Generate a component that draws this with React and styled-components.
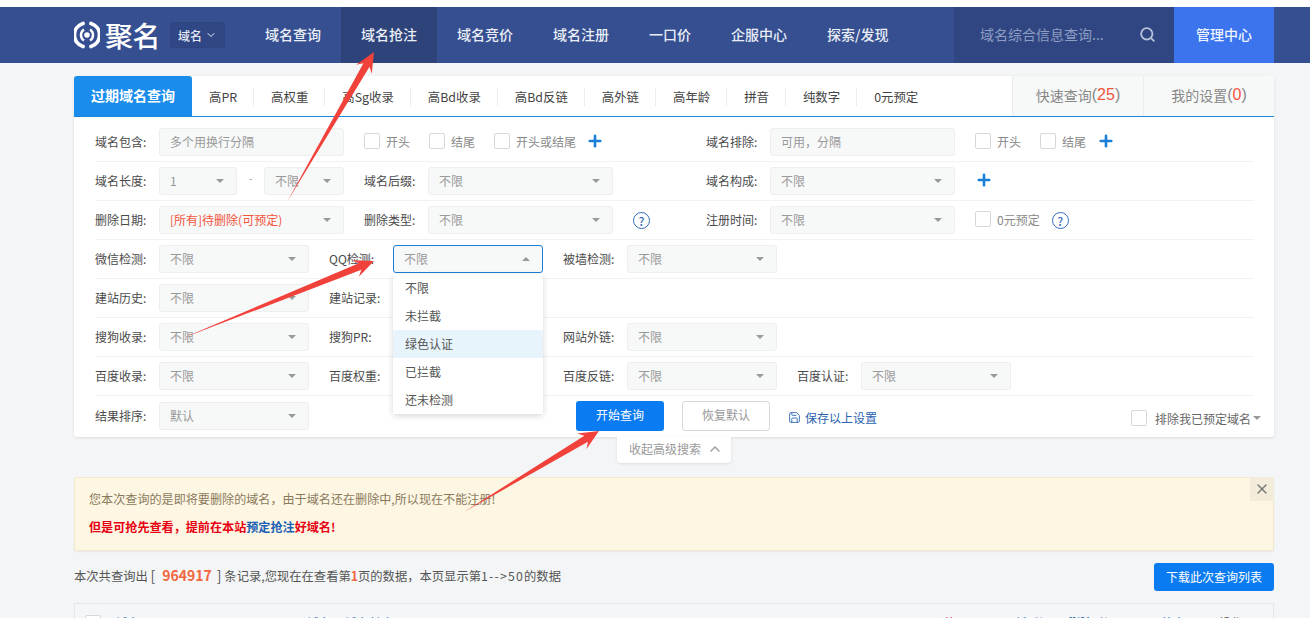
import React from 'react'
import styled, { createGlobalStyle } from 'styled-components'
import { ChevronDown, ChevronUp, Plus, Save, Search, X } from 'lucide-react'

const GlobalStyle = createGlobalStyle`
  html, body {
    margin: 0;
    height: 618px;
    overflow: hidden;
    background: #f4f5f6;
    font-family: "Noto Sans CJK SC", "Liberation Sans", sans-serif;
    font-size: 12px;
    color: #555;
  }
  * { box-sizing: border-box; }
`

const Page = styled.div`
  position: relative;
  width: 1310px;
  height: 618px;
  overflow: hidden;
  padding-top: 7px;
  background: linear-gradient(#fff 7px, #f4f5f6 7px);
`

const Header = styled.header`
  display: flex;
  align-items: stretch;
  height: 56px;
  padding-left: 74px;
  background: #354f90;
`

const Logo = styled.div`
  display: flex;
  align-items: center;
  gap: 5px;
  width: 96px;
  color: #fff;
  font-size: 28px;
  font-weight: 500;
  letter-spacing: -0.5px;
  line-height: 1;
  white-space: nowrap;
`

const TypeSwitch = styled.div`
  display: flex;
  align-items: center;
  justify-content: center;
  gap: 3px;
  align-self: center;
  width: 55px;
  height: 26px;
  margin-right: 20px;
  border: 1px solid #2e4580;
  border-radius: 3px;
  background: #2f4784;
  color: #e6ebf5;
  font-size: 12px;
  font-weight: 500;
`

const NavItem = styled.a`
  display: flex;
  align-items: center;
  padding: 0 20px 2px;
  background: ${(p) => (p.$active ? '#2d4379' : 'transparent')};
  color: #e9edf6;
  font-size: 14px;
  font-weight: 500;
  white-space: nowrap;
`

const SearchBox = styled.div`
  display: flex;
  align-items: center;
  justify-content: space-between;
  width: 220px;
  margin-left: auto;
  padding: 0 18px 2px 26px;
  background: #2f4682;
  color: #8e9dc2;
  font-size: 14px;
  white-space: nowrap;
`

const ManageButton = styled.a`
  display: flex;
  align-items: center;
  justify-content: center;
  width: 100px;
  margin-right: 36px;
  padding-bottom: 2px;
  background: #3c74ee;
  color: #eef3fe;
  font-size: 14px;
  font-weight: 500;
`

const Content = styled.main`
  width: 1200px;
  margin-left: 74px;
  padding-top: 13px;
`

const Panel = styled.section`
  height: 361px;
  background: #fff;
  border-radius: 3px;
  box-shadow: 0 1px 3px rgba(0, 0, 0, 0.1);
`

const TabBar = styled.div`
  display: flex;
  align-items: stretch;
  height: 41px;
  border-bottom: 1px solid #1a86e0;
`

const ActiveTab = styled.div`
  display: flex;
  align-items: center;
  justify-content: center;
  width: 118px;
  padding-bottom: 2px;
  background: #1a8cec;
  border-radius: 3px 3px 0 0;
  color: #fff;
  font-size: 14px;
  font-weight: 700;
`

const Tab = styled.a`
  position: relative;
  display: flex;
  align-items: center;
  padding: 1px 17px 0;
  color: #444;
  font-size: 12.4px;
  white-space: nowrap;
  &:not(:last-of-type)::after {
    content: '';
    position: absolute;
    right: 0;
    top: 12px;
    height: 18px;
    width: 1px;
    background: #eee;
  }
`

const SideTab = styled.div`
  display: flex;
  align-items: center;
  justify-content: center;
  width: 131px;
  padding-bottom: 2px;
  background: #f7f8f8;
  border-left: 1px solid #ececec;
  color: #888;
  font-size: 14px;
  ${(p) => p.$first && 'margin-left: auto;'}
`

const Count = styled.span`
  font-family: "Liberation Sans", sans-serif;
  font-size: 16px;
  em { font-style: normal; color: #f2553c; }
`

const Rows = styled.div`
  padding: 6px 20px 0 21px;
`

const WideRow = styled.div`
  display: grid;
  grid-template-columns: 269px 342px 1fr;
  align-items: center;
  height: 39px;
  border-bottom: 1px solid #f2f2f2;
`

const NarrowRow = styled.div`
  display: grid;
  grid-template-columns: 234px 234px 234px 1fr;
  align-items: center;
  height: 39px;
  border-bottom: 1px solid #f2f2f2;
`

const ActionRow = styled.div`
  display: flex;
  align-items: center;
  height: 40px;
  margin-right: -7px;
`

const Field = styled.div`
  display: flex;
  align-items: center;
`

const Label = styled.label`
  flex: none;
  width: 64px;
  padding-bottom: 2px;
  color: #4a4a4a;
  font-size: 12px;
  white-space: nowrap;
`

const SelectBox = styled.div`
  position: relative;
  flex: none;
  display: flex;
  align-items: center;
  width: ${(p) => p.$w || 150}px;
  height: 28px;
  padding: 0 0 2px 10px;
  background: #f7f8f8;
  border: 1px solid ${(p) => (p.$open ? '#1a7fd6' : '#eeeeee')};
  border-radius: 3px;
  color: ${(p) => (p.$alert ? '#f2553c' : '#999')};
  font-size: 12px;
  white-space: nowrap;
  &::after {
    content: '';
    position: absolute;
    right: 12px;
    top: 50%;
    margin-top: -2px;
    border: 4px solid transparent;
    border-top: ${(p) => (p.$open ? 0 : '4px solid #999')};
    border-bottom: ${(p) => (p.$open ? '4px solid #999' : 0)};
  }
`

const TextInput = styled(SelectBox)`
  &::after { display: none; }
`

const Dash = styled.span`
  flex: none;
  width: 27px;
  text-align: center;
  color: #aaa;
  transform: translateY(-4px);
`

const CheckItem = styled.span`
  display: inline-flex;
  align-items: center;
  gap: 6px;
  margin-left: ${(p) => p.$ml || 0}px;
  margin-right: ${(p) => (p.$end ? 0 : 19)}px;
  padding-bottom: 2px;
  color: #888;
  font-size: 12px;
  white-space: nowrap;
`

const Box = styled.i`
  flex: none;
  width: 16px;
  height: 16px;
  background: #fff;
  border: 1px solid #d8d8d8;
  border-radius: 2px;
`

const AddIcon = styled(Plus)`
  flex: none;
  color: #1a7fd6;
  margin-left: ${(p) => p.$ml || 0}px;
  transform: translateY(-1px);
`

const Help = styled.span`
  display: inline-flex;
  align-items: center;
  justify-content: center;
  flex: none;
  width: 17px;
  height: 17px;
  margin-left: ${(p) => p.$ml || 0}px;
  border: 1.5px solid #2f6cb8;
  border-radius: 50%;
  color: #2f6cb8;
  font-size: 12px;
  font-weight: 500;
`

const Dropdown = styled.ul`
  position: absolute;
  left: -1px;
  top: 28px;
  z-index: 5;
  width: 150px;
  margin: 0;
  padding: 0;
  list-style: none;
  background: #fff;
  border-radius: 0 0 3px 3px;
  box-shadow: 0 2px 6px rgba(0, 0, 0, 0.16);
`

const Option = styled.li`
  display: flex;
  align-items: center;
  height: 28px;
  padding: 0 0 1px 12px;
  background: ${(p) => (p.$hover ? '#e8f4fc' : '#fff')};
  color: #555;
  font-size: 12px;
`

const SubmitButton = styled.button`
  width: 88px;
  height: 30px;
  margin-left: 267px;
  padding: 0 0 3px;
  background: #0a7bf0;
  border: 0;
  border-radius: 3px;
  color: #fff;
  font: inherit;
`

const ResetButton = styled.button`
  width: 88px;
  height: 30px;
  margin-left: 18px;
  padding: 0 0 3px;
  background: #fff;
  border: 1px solid #d9d9d9;
  border-radius: 3px;
  color: #999;
  font: inherit;
`

const SaveLink = styled.a`
  display: inline-flex;
  align-items: center;
  gap: 4px;
  margin-left: 18px;
  color: #2a62b0;
  font-size: 12px;
  transform: translateY(1px);
`

const ExcludeCheck = styled.span`
  display: inline-flex;
  align-items: center;
  gap: 8px;
  margin-left: auto;
  color: #666;
  font-size: 12px;
  transform: translateY(2px);
  &::after {
    content: '';
    margin-left: -6px;
    border: 4px solid transparent;
    border-top: 4px solid #999;
    border-bottom: 0;
  }
`

const CollapseTab = styled.div`
  display: flex;
  align-items: center;
  justify-content: center;
  gap: 6px;
  width: 114px;
  height: 26px;
  margin-left: 543px;
  padding: 0 0 3px 4px;
  background: #fff;
  border-radius: 0 0 4px 4px;
  box-shadow: 0 1px 3px rgba(0, 0, 0, 0.1);
  color: #999;
  font-size: 12px;
`

const Notice = styled.div`
  position: relative;
  height: 74px;
  margin-top: 14px;
  padding: 12px 14px 0 14px;
  background: #fdf6e3;
  border: 1px solid #f3e8cb;
  border-radius: 2px;
  box-shadow: 0 1px 2px rgba(0, 0, 0, 0.06);
`

const NoticeLine = styled.p`
  margin: 0 0 10px;
  height: 18px;
  line-height: 18px;
  color: #8a7a5c;
  font-size: 12.1px;
`

const NoticeStrong = styled(NoticeLine)`
  color: #e60012;
  font-weight: 700;
  a { color: #1a5fb4; }
`

const CloseButton = styled.span`
  position: absolute;
  top: -1px;
  right: -1px;
  display: flex;
  align-items: center;
  justify-content: center;
  width: 24px;
  height: 24px;
  background: #f3ecda;
  color: #777;
`

const Summary = styled.div`
  display: flex;
  align-items: center;
  justify-content: space-between;
  height: 28px;
  margin-top: 12px;
  color: #555;
  font-size: 12px;
  b { color: #f2673e; }
`

const SummaryText = styled.span`
  padding-bottom: 4px;
  font-size: 12.3px;
`

const Total = styled.b`
  margin: 0 5px 0 7px;
  font-size: 14px;
`

const Bracket = styled.span`
  font-size: 14px;
`

const PageRange = styled.span`
  letter-spacing: 1.2px;
`

const DownloadButton = styled.button`
  width: 120px;
  height: 28px;
  padding: 0 0 2px;
  background: #0a7bf0;
  border: 0;
  border-radius: 3px;
  color: #fff;
  font: inherit;
`

const TableHead = styled.div`
  display: flex;
  align-items: flex-start;
  height: 40px;
  margin-top: 12px;
  padding: 11px 0 0 10px;
  background: #f5f6f7;
  border: 1px solid #e6e7e9;
  color: #555;
  font-size: 12px;
`

const HeadCell = styled.span`
  flex: none;
  width: ${(p) => p.$w}px;
  margin-left: ${(p) => p.$ml || 0}px;
  color: ${(p) => p.$color || '#1a5fb4'};
  font-size: 12px;
  line-height: 16px;
  white-space: nowrap;
`

const Overlay = styled.svg`
  position: absolute;
  left: 0;
  top: 0;
  z-index: 10;
  pointer-events: none;
`

const LogoMark = () => (
  <svg width="26" height="28" viewBox="0 0 26 28" fill="none" stroke="#fff">
    <path d="M9 2.5 A12 12 0 0 0 9 25.5" strokeWidth="3.8" strokeLinecap="round" />
    <path d="M17 2.5 A12 12 0 0 1 17 25.5" strokeWidth="3.8" strokeLinecap="round" />
    <path d="M10 8.5 A6.5 6.5 0 0 0 10 19.5 M16 8.5 A6.5 6.5 0 0 1 16 19.5" strokeWidth="2.4" />
    <circle cx="13" cy="14" r="2.8" fill="#fff" stroke="none" />
  </svg>
)

// tapered screenshot annotation arrow, tail is a point
const arrowPoints = (x1, y1, x2, y2) => {
  const len = Math.hypot(x2 - x1, y2 - y1)
  const ux = (x2 - x1) / len
  const uy = (y2 - y1) / len
  const at = (back, side) => `${x2 - ux * back - uy * side},${y2 - uy * back + ux * side}`
  return [`${x1},${y1}`, at(15, 3.5), at(20, 9), `${x2},${y2}`, at(20, -9), at(15, -3.5)].join(' ')
}

const Arrows = () => (
  <Overlay width="1310" height="618">
    <polygon points={arrowPoints(287, 202, 374, 52)} fill="#f1413b" />
    <polygon points={arrowPoints(183, 338, 374, 261)} fill="#f1413b" />
    <polygon points={arrowPoints(464, 512, 599, 431)} fill="#f1413b" />
  </Overlay>
)

const navItems = ['域名查询', '域名抢注', '域名竞价', '域名注册', '一口价', '企服中心', '探索/发现']
const tabs = ['高PR', '高权重', '高Sg收录', '高Bd收录', '高Bd反链', '高外链', '高年龄', '拼音', '纯数字', '0元预定']
const qqOptions = ['不限', '未拦截', '绿色认证', '已拦截', '还未检测']

const SelectField = ({ label, w, value = '不限', alert, children }) => (
  <Field>
    <Label>{label}</Label>
    <SelectBox $w={w} $alert={alert}>{value}</SelectBox>
    {children}
  </Field>
)

export default function App() {
  return (
    <Page>
      <GlobalStyle />
      <Header>
        <Logo>
          <LogoMark />
          聚名
        </Logo>
        <TypeSwitch>
          域名 <ChevronDown size={12} />
        </TypeSwitch>
        {navItems.map((item, i) => (
          <NavItem key={item} $active={i === 1}>{item}</NavItem>
        ))}
        <SearchBox>
          域名综合信息查询...
          <Search size={17} strokeWidth={2.6} color="#b6c1da" />
        </SearchBox>
        <ManageButton>管理中心</ManageButton>
      </Header>

      <Content>
        <Panel>
          <TabBar>
            <ActiveTab>过期域名查询</ActiveTab>
            {tabs.map((t) => <Tab key={t}>{t}</Tab>)}
            <SideTab $first>快速查询<Count>(<em>25</em>)</Count></SideTab>
            <SideTab>我的设置<Count>(<em>0</em>)</Count></SideTab>
          </TabBar>
          <Rows>
            <WideRow>
              <Field>
                <Label>域名包含:</Label>
                <TextInput $w={185}>多个用换行分隔</TextInput>
              </Field>
              <Field>
                <CheckItem><Box />开头</CheckItem>
                <CheckItem><Box />结尾</CheckItem>
                <CheckItem $end><Box />开头或结尾</CheckItem>
                <AddIcon size={18} strokeWidth={3.5} $ml={10} />
              </Field>
              <Field>
                <Label>域名排除:</Label>
                <TextInput $w={185}>可用&#xFF0C;分隔</TextInput>
                <CheckItem $ml={20}><Box />开头</CheckItem>
                <CheckItem $end><Box />结尾</CheckItem>
                <AddIcon size={18} strokeWidth={3.5} $ml={11} />
              </Field>
            </WideRow>
            <WideRow>
              <Field>
                <Label>域名长度:</Label>
                <SelectBox $w={78}>1</SelectBox>
                <Dash>-</Dash>
                <SelectBox $w={80}>不限</SelectBox>
              </Field>
              <SelectField label="域名后缀:" w={185} />
              <SelectField label="域名构成:" w={185}>
                <AddIcon size={18} strokeWidth={3.5} $ml={20} />
              </SelectField>
            </WideRow>
            <WideRow>
              <SelectField label="删除日期:" w={185} value="[所有]待删除(可预定)" alert />
              <SelectField label="删除类型:" w={185}>
                <Help $ml={20}>?</Help>
              </SelectField>
              <SelectField label="注册时间:" w={185}>
                <CheckItem $ml={20} $end><Box />0元预定</CheckItem>
                <Help $ml={12}>?</Help>
              </SelectField>
            </WideRow>
            <NarrowRow>
              <SelectField label="微信检测:" />
              <Field>
                <Label>QQ检测:</Label>
                <SelectBox $open>
                  不限
                  <Dropdown>
                    {qqOptions.map((o, i) => (
                      <Option key={o} $hover={i === 2}>{o}</Option>
                    ))}
                  </Dropdown>
                </SelectBox>
              </Field>
              <SelectField label="被墙检测:" />
            </NarrowRow>
            <NarrowRow>
              <SelectField label="建站历史:" />
              <Field><Label>建站记录:</Label></Field>
            </NarrowRow>
            <NarrowRow>
              <SelectField label="搜狗收录:" />
              <Field><Label>搜狗PR:</Label></Field>
              <SelectField label="网站外链:" />
            </NarrowRow>
            <NarrowRow>
              <SelectField label="百度收录:" />
              <Field><Label>百度权重:</Label></Field>
              <SelectField label="百度反链:" />
              <SelectField label="百度认证:" />
            </NarrowRow>
            <ActionRow>
              <SelectField label="结果排序:" value="默认" />
              <SubmitButton>开始查询</SubmitButton>
              <ResetButton>恢复默认</ResetButton>
              <SaveLink><Save size={13} strokeWidth={1.6} />保存以上设置</SaveLink>
              <ExcludeCheck><Box />排除我已预定域名</ExcludeCheck>
            </ActionRow>
          </Rows>
        </Panel>
        <CollapseTab>收起高级搜索 <ChevronUp size={16} /></CollapseTab>

        <Notice>
          <NoticeLine>您本次查询的是即将要删除的域名&#xFF0C;由于域名还在删除中,所以现在不能注册!</NoticeLine>
          <NoticeStrong>但是可抢先查看&#xFF0C;提前在本站<a>预定抢注</a>好域名!</NoticeStrong>
          <CloseButton><X size={16} strokeWidth={2} /></CloseButton>
        </Notice>

        <Summary>
          <SummaryText>
            本次共查询出 <Bracket>[</Bracket><Total>964917</Total><Bracket>]</Bracket> 条记录,您现在在查看第<b>1</b>页的数据&#xFF0C;本页显示第<PageRange>1--&gt;50</PageRange>的数据
          </SummaryText>
          <DownloadButton>下载此次查询列表</DownloadButton>
        </Summary>

        <TableHead>
          <Box />
          <HeadCell $ml={15} $w={191}>域名</HeadCell>
          <HeadCell $w={38}>域名</HeadCell>
          <HeadCell $w={587}>域名长度</HeadCell>
          <HeadCell $w={71} $color="#e60012">价格</HeadCell>
          <HeadCell $w={65}>更新时间</HeadCell>
          <HeadCell $w={93}>删除时间</HeadCell>
          <HeadCell $w={58}>状态</HeadCell>
          <HeadCell $w={30} $color="#555">操作</HeadCell>
        </TableHead>
      </Content>
      <Arrows />
    </Page>
  )
}
